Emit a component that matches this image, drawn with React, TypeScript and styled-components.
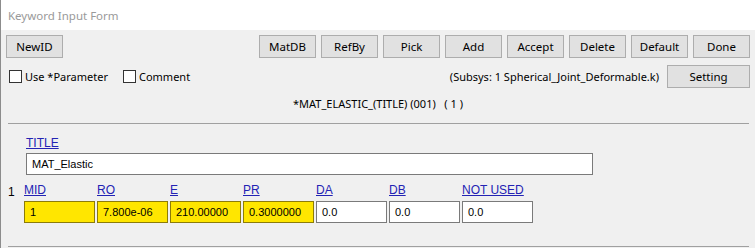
import React from 'react'
import styled, { createGlobalStyle } from 'styled-components'

const GlobalStyle = createGlobalStyle`
	html, body {
		margin: 0;
		padding: 0;
		background: #f0f0f0;
	}
	body {
		font-family: 'Noto Sans', 'Liberation Sans', sans-serif;
		font-size: 12px;
		color: #000;
	}
`

const Window = styled.div`
	width: 755px;
	height: 248px;
	box-sizing: border-box;
	border-left: 1px solid #8c8c8c;
	background: #f0f0f0;
	overflow: hidden;
`

const TitleBar = styled.div`
	height: 30px;
	background: #fff;
	color: #9a9a9a;
	display: flex;
	align-items: center;
	padding-left: 7px;
	font-size: 11.5px;
`

const Toolbar = styled.div`
	display: flex;
	align-items: center;
	justify-content: space-between;
	margin-top: 5px;
	padding: 0 5px 0 5px;
`

const ButtonGroup = styled.div`
	display: flex;
	gap: 5px;
`

const Button = styled.button<{ $w?: number }>`
	width: ${({ $w }) => $w ?? 57}px;
	height: 23px;
	box-sizing: border-box;
	background: #e1e1e1;
	border: 1px solid #adadad;
	border-radius: 0;
	padding: 0;
	font-family: inherit;
	font-size: 11.5px;
	color: #000;
`

const OptionsRow = styled.div`
	display: flex;
	align-items: center;
	justify-content: space-between;
	margin-top: 7px;
	padding: 0 5px 0 8px;
	height: 23px;
`

const Checks = styled.div`
	display: flex;
	align-items: center;
	gap: 15px;
`

const CheckLabel = styled.label`
	display: flex;
	align-items: center;
	gap: 3px;
	font-size: 11px;
`

const Box = styled.span`
	width: 13px;
	height: 13px;
	box-sizing: border-box;
	border: 1px solid #333;
	background: #fff;
`

const Subsys = styled.div`
	display: flex;
	align-items: center;
	gap: 8px;
	font-size: 11px;
`

const Heading = styled.div`
	text-align: center;
	margin-top: 7px;
	font-size: 11px;
	white-space: pre;
	height: 18px;
	line-height: 18px;
`

const Rule = styled.hr`
	margin: 10px 6px 0 7px;
	border: none;
	border-top: 1px solid #a0a0a0;
	height: 0;
`

const Section = styled.div`
	padding: 12px 0 0 7px;
`

const FieldLabel = styled.span`
	font-family: 'Liberation Sans', Arial, sans-serif;
	font-size: 12px;
	color: #2323b4;
	text-decoration: underline;
	line-height: 14px;
	display: block;
`

const TitleBlock = styled.div`
	padding-left: 18px;
	display: flex;
	flex-direction: column;
	gap: 3px;
`

const Input = styled.div<{ $w: number; $hl?: boolean }>`
	width: ${({ $w }) => $w}px;
	height: 22px;
	box-sizing: border-box;
	border: 1px solid ${({ $hl }) => ($hl ? '#8c7c0a' : '#7a7a7a')};
	background: ${({ $hl }) => ($hl ? '#ffe600' : '#fff')};
	font-family: 'Liberation Sans', Arial, sans-serif;
	font-size: 11px;
	display: flex;
	align-items: center;
	padding-left: 5px;
`

const CardRow = styled.div`
	display: flex;
	margin-top: 8px;
`

const RowNum = styled.div`
	width: 16px;
	font-family: 'Liberation Sans', Arial, sans-serif;
	font-size: 12px;
	line-height: 14px;
	padding-top: 2px;
`

const Fields = styled.div`
	display: flex;
	gap: 2px;
`

const Field = styled.div`
	display: flex;
	flex-direction: column;
	gap: 4px;
`

const BottomRule = styled.hr`
	margin: 23px 6px 0 7px;
	border: none;
	border-top: 1px solid #a0a0a0;
	height: 0;
`

const actions = ['MatDB', 'RefBy', 'Pick', 'Add', 'Accept', 'Delete', 'Default', 'Done']

const card = [
	{ name: 'MID', value: '1', hl: true },
	{ name: 'RO', value: '7.800e-06', hl: true },
	{ name: 'E', value: '210.00000', hl: true },
	{ name: 'PR', value: '0.3000000', hl: true },
	{ name: 'DA', value: '0.0' },
	{ name: 'DB', value: '0.0' },
	{ name: 'NOT USED', value: '0.0' },
]

const App: React.FC = () => {
	return (
		<>
			<GlobalStyle />
			<Window>
				<TitleBar>Keyword Input Form</TitleBar>
				<Toolbar>
					<Button>NewID</Button>
					<ButtonGroup>
						{actions.map((a) => (
							<Button key={a}>{a}</Button>
						))}
					</ButtonGroup>
				</Toolbar>
				<OptionsRow>
					<Checks>
						<CheckLabel>
							<Box />
							Use *Parameter
						</CheckLabel>
						<CheckLabel>
							<Box />
							Comment
						</CheckLabel>
					</Checks>
					<Subsys>
						(Subsys: 1 Spherical_Joint_Deformable.k)
						<Button $w={83}>Setting</Button>
					</Subsys>
				</OptionsRow>
				<Heading>{'*MAT_ELASTIC_(TITLE) (001)   ( 1 )'}</Heading>
				<Rule />
				<Section>
					<TitleBlock>
						<FieldLabel>TITLE</FieldLabel>
						<Input $w={567}>MAT_Elastic</Input>
					</TitleBlock>
					<CardRow>
						<RowNum>1</RowNum>
						<Fields>
							{card.map((f) => (
								<Field key={f.name}>
									<FieldLabel>{f.name}</FieldLabel>
									<Input $w={71} $hl={f.hl}>
										{f.value}
									</Input>
								</Field>
							))}
						</Fields>
					</CardRow>
				</Section>
				<BottomRule />
			</Window>
		</>
	)
}

export default App
